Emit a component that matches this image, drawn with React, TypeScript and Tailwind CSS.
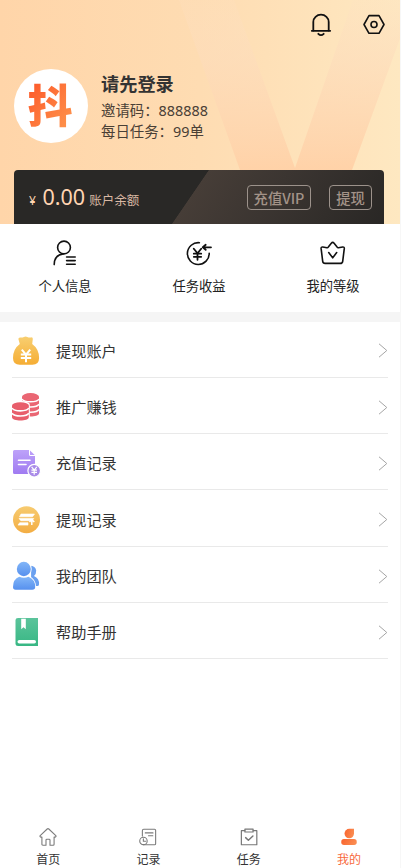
import type { ReactNode } from "react";

const stroke = { fill: "none", strokeLinecap: "round", strokeLinejoin: "round" } as const;

function Bell() {
  return (
    <svg width="22" height="26" viewBox="0 0 22 26" {...stroke} stroke="#111" strokeWidth="1.8">
      <path d="M3.300 18.600V9.900a7.700 7.200 0 0 1 15.400 0v8.700" />
      <path d="M1.800 18.800h18.400M8.300 21.800q2.700 2.600 5.400 0" />
    </svg>
  );
}

function Gear() {
  return (
    <svg width="24" height="26" viewBox="0 0 24 26" {...stroke} stroke="#111" strokeWidth="1.6">
      <path d="M7 3.600h10l5 8.900-5 8.800H7l-5-8.800z" />
      <circle cx="12" cy="12.500" r="3" />
    </svg>
  );
}

function ProfileIcon() {
  return (
    <svg width="28" height="28" viewBox="0 0 28 28" {...stroke} stroke="#111" strokeWidth="1.6">
      <circle cx="13" cy="8.500" r="6.400" />
      <path d="M3.200 25.600c0-6.200 3.700-10 9-10.700M15.600 18h8.600M15.600 21.600h8.600M15.600 25.200h8.600" />
    </svg>
  );
}

function IncomeIcon() {
  return (
    <svg width="28" height="28" viewBox="0 0 28 28" {...stroke} stroke="#111" strokeWidth="1.6">
      <path d="M14.400 3.700A10.900 10.900 0 1 0 24.200 14.200" />
      <path d="M8.800 9.700l3.700 4.600 3.700-4.600M12.500 14.300v6.500M8.800 14.700h7.400M8.800 17.800h7.400" strokeWidth="1.8" />
      <path d="M26 8.300h-8M20.700 5.800l-2.900 2.500 2.900 2.500" strokeWidth="1.800" />
    </svg>
  );
}

function LevelIcon() {
  return (
    <svg width="28" height="28" viewBox="0 0 28 28" {...stroke} stroke="#111" strokeWidth="1.6">
      <path d="M3.700 8l4.300.7q.8.1 1.300-.6l3-3.900q1.400-1.600 2.800 0l3 3.900q.5.700 1.300.6l4.300-.7q1.700-.2 1.600 1.400L23.700 22.300q-.3 2.100-2.400 2.100H6.100q-2.100 0-2.400-2.100L2.100 9.400Q2 7.800 3.700 8z" />
      <path d="M9.700 13.600l4 5.200 4-5.200" />
    </svg>
  );
}

function BagIcon() {
  return (
    <svg width="30" height="30" viewBox="0 0 30 30">
      <defs>
        <linearGradient id="bag" x1="0" y1="0" x2="0" y2="1">
          <stop stopColor="#f8cf71" /><stop offset="1" stopColor="#f5ad34" />
        </linearGradient>
      </defs>
      <path d="M6.400 3q0-1.600 1.800-1.500 2 .4 3.700-.6 1.700-.9 3.400 0 1.800 1 3.900.5 1.700-.3 1.600 1.600L20.200 8q6.900 5 6.900 14 0 6.800-6.800 6.800H7.800Q1 28.800 1 22q0-9 6.800-14z" fill="url(#bag)" />
      <path d="M9.800 13.700l4.200 5 4.200-5M14 18.700v7.500M8.800 18.500h10.400M8.800 22h10.400" stroke="#fff" strokeWidth="2" fill="none" />
    </svg>
  );
}

function CoinsIcon() {
  return (
    <svg width="30" height="30" viewBox="0 0 30 30">
      <g fill="#ea6673">
        <path d="M10 5v16.500c0 4 17 4 17 0V5z" />
        <ellipse cx="18.500" cy="4.600" rx="8.500" ry="3.500" />
      </g>
      <path d="M10 7c2 3.700 15 3.700 17 0M10 12.200c2 3.700 15 3.700 17 0M10 17.400c2 3.700 15 3.700 17 0" fill="none" stroke="#fff" strokeWidth="1.500" />
      <path d="M-.4 12.800c0-5 18.200-5 18.200 0v16H-.4z" fill="#fff" />
      <path d="M0 14v11.300c0 4.300 16.800 4.300 16.800 0V14z" fill="#e85e6b" />
      <ellipse cx="8.400" cy="13.600" rx="8.400" ry="3.400" fill="#e85e6b" />
      <path d="M0 16c2 3.800 14.800 3.800 16.800 0M0 21.200c2 3.800 14.800 3.800 16.800 0" fill="none" stroke="#fff" strokeWidth="1.600" />
    </svg>
  );
}

function RechargeIcon() {
  return (
    <svg width="30" height="30" viewBox="0 0 30 30">
      <defs>
        <linearGradient id="page" x1="0" y1="0" x2="0" y2="1">
          <stop stopColor="#bda2f9" /><stop offset="1" stopColor="#a07bf1" />
        </linearGradient>
      </defs>
      <path d="M2.500 2H17v4.500q0 1.500 1.500 1.500H23v18H2.500Q1 26 1 24.500v-21Q1 2 2.500 2z" fill="url(#page)" />
      <path d="M18 2.500L22.700 7H18z" fill="#b99cf8" />
      <path d="M6.500 12.300H18M6.500 16.500h7.500" stroke="#fff" strokeWidth="1.600" strokeLinecap="round" />
      <circle cx="22.200" cy="22.700" r="6.300" fill="#a98be8" stroke="#fff" strokeWidth="1.200" />
      <path d="M19.600 18.900l2.600 3.200 2.600-3.200M22.200 22v4.700M19.400 22.200H25M19.400 24.400H25" stroke="#fff" strokeWidth="1.200" fill="none" />
    </svg>
  );
}

function WithdrawIcon() {
  return (
    <svg width="30" height="30" viewBox="0 0 30 30">
      <defs>
        <linearGradient id="disc" x1="0" y1="0" x2="0" y2="1">
          <stop stopColor="#f7cb70" /><stop offset="1" stopColor="#f3ad43" />
        </linearGradient>
      </defs>
      <circle cx="14.500" cy="14.800" r="13.500" fill="url(#disc)" />
      <path d="M9 9h13.500l-2 2.800h-13zM7 13.500h14.800l-1.800 2.200H8.800zM7.700 17.700h8.300v2.400H6z" fill="#fff" stroke="#fff" strokeWidth=".6" strokeLinejoin="round" />
      <path d="M19.800 20v-4.600M17.500 17l2.300-2.400 2.500 2.400" fill="none" stroke="#fff" strokeWidth="1.500" />
    </svg>
  );
}

function TeamIcon() {
  return (
    <svg width="30" height="30" viewBox="0 0 30 30">
      <defs>
        <linearGradient id="team" x1="0" y1="0" x2="0" y2="1">
          <stop stopColor="#82b6f8" /><stop offset="1" stopColor="#5690ee" />
        </linearGradient>
      </defs>
      <path d="M17 4.700q6.500-.4 7.200 4.900.2 3.300-2.200 5.500 5.500 2.500 5 8.300-.2 1.700-1.900 1.500h-6V5z" fill="#6aa0f0" />
      <g fill="url(#team)" stroke="#fff" strokeWidth="1.800" paintOrder="stroke">
        <path d="M7.300 15.800q4.700 2.100 9.200 0 6.700 2.700 6.700 10.200 0 2.800-3 2.800H3.600Q1 28.800 1 26q0-7.800 6.300-10.200z" />
        <ellipse cx="11.800" cy="8" rx="7" ry="7.200" />
      </g>
    </svg>
  );
}

function BookIcon() {
  return (
    <svg width="30" height="30" viewBox="0 0 30 30">
      <defs>
        <linearGradient id="book" x1="0" y1="0" x2="0" y2="1">
          <stop stopColor="#5bc49b" /><stop offset="1" stopColor="#38b784" />
        </linearGradient>
      </defs>
      <path d="M6 1h20v28H6q-2.500 0-2.500-2V3Q3.500 1 6 1z" fill="url(#book)" />
      <path d="M9.200 1.800h4.600v10.400l-2.300-2-2.300 2z" fill="#fff" />
      <rect x="5.500" y="23" width="18.500" height="3.600" rx="1.800" fill="#fff" />
    </svg>
  );
}

function HomeTab() {
  return (
    <svg width="22" height="22" viewBox="0 0 22 22" {...stroke} stroke="#7b7b7b" strokeWidth="1.200">
      <path d="M10.100 2.200q.9-.7 1.800 0l7.700 7.200q.8 1.400-.8 1.700h-1.100v7.800q0 1.100-1.100 1.100h-3.400v-5.600q0-1-1-1H9.800q-1 0-1 1V20H5.400q-1.100 0-1.100-1.100v-7.800H3.200q-1.600-.3-.8-1.700z" />
    </svg>
  );
}

function RecordTab() {
  return (
    <svg width="22" height="22" viewBox="0 0 22 22" {...stroke} stroke="#7b7b7b" strokeWidth="1.200">
      <path d="M4.800 10V4q0-1.500 1.500-1.500h11.900q1.200 0 1.200 1.200v14.600q0 1.200-1.200 1.200H6M8 6.500h8.500M11.500 9.600h4.800" />
      <circle cx="6" cy="15.300" r="4.100" />
      <path d="M5.900 13v2.700h2.500" />
    </svg>
  );
}

function TaskTab() {
  return (
    <svg width="22" height="22" viewBox="0 0 22 22" {...stroke} stroke="#777" strokeWidth="1.300">
      <path d="M6.500 4H2.600v15.500h17V4h-4" />
      <rect x="6.500" y="2.300" width="9" height="3.200" />
      <path d="M7.300 11.700l3 2.800 5-4.700" strokeWidth="1.600" />
    </svg>
  );
}

function MineTab() {
  return (
    <svg width="22" height="22" viewBox="0 0 22 22">
      <defs>
        <linearGradient id="mine" x1="0" y1="0" x2="1" y2=".3">
          <stop stopColor="#f9622c" /><stop offset="1" stopColor="#fa8b50" />
        </linearGradient>
      </defs>
      <path d="M11.300 2h5.200v5.200a5.200 5.200 0 1 1-5.200-5.200z" fill="url(#mine)" />
      <rect x="2.500" y="13.200" width="17" height="6.500" rx="3" fill="url(#mine)" />
    </svg>
  );
}

const shortcuts: { label: string; icon: ReactNode }[] = [
  { label: "个人信息", icon: <ProfileIcon /> },
  { label: "任务收益", icon: <IncomeIcon /> },
  { label: "我的等级", icon: <LevelIcon /> },
];

const rows: { label: string; icon: ReactNode }[] = [
  { label: "提现账户", icon: <BagIcon /> },
  { label: "推广赚钱", icon: <CoinsIcon /> },
  { label: "充值记录", icon: <RechargeIcon /> },
  { label: "提现记录", icon: <WithdrawIcon /> },
  { label: "我的团队", icon: <TeamIcon /> },
  { label: "帮助手册", icon: <BookIcon /> },
];

const tabs: { label: string; icon: ReactNode; active?: boolean }[] = [
  { label: "首页", icon: <HomeTab /> },
  { label: "记录", icon: <RecordTab /> },
  { label: "任务", icon: <TaskTab /> },
  { label: "我的", icon: <MineTab />, active: true },
];

function HeaderBackdrop() {
  return (
    <svg className="absolute inset-0" width="400" height="224" viewBox="0 0 400 224">
      <defs>
        <linearGradient id="vfade" x1="0" y1="0" x2="0" y2="1">
          <stop stopColor="#fde0c2" stopOpacity=".2" />
          <stop offset=".35" stopColor="#fddcbb" stopOpacity=".6" />
          <stop offset="1" stopColor="#ffd2a8" />
        </linearGradient>
      </defs>
      <path d="M179 0h55l61 168 58-168h61l-62 170H240z" fill="url(#vfade)" />
    </svg>
  );
}

export default function App() {
  return (
    <div className="h-[868px] w-[401px] overflow-hidden bg-[#f7f7f7] font-['Noto_Sans','Noto_Sans_CJK_SC',sans-serif] text-[#222]">
      <div className="flex h-full w-[400px] flex-col bg-white">
        <header className="relative h-[224px] shrink-0 overflow-hidden bg-linear-to-r from-[#ffd5a9] via-[#fedcb2] to-[#fee8c1]">
          <HeaderBackdrop />
          <div className="relative flex h-full flex-col">
            <div className="flex h-[50px] items-center justify-end gap-[30px] pr-[14px]">
              <Bell />
              <Gear />
            </div>
            <div className="flex h-[120px] items-start pt-[19px] pl-[14px]">
              <div className="flex h-[74px] w-[74px] items-center justify-center rounded-full bg-white pr-[2px] pb-[5px]">
                <span className="bg-linear-to-br from-[#fc4f24] to-[#fd984f] bg-clip-text font-['Noto_Sans_CJK_SC',sans-serif] text-[45px] leading-[58px] font-black text-transparent">抖</span>
              </div>
              <div className="flex flex-col pt-[2px] pl-[13px] text-[14.400px] leading-[21px] text-[#4a4036]">
                <h1 className="mb-[3px] text-[18.200px] leading-[26px] font-bold text-[#333]">请先登录</h1>
                <p>邀请码：888888</p>
                <p>每日任务：99单</p>
              </div>
            </div>
            <div className="ml-[13.500px] flex h-[54px] w-[370.500px] items-center justify-between rounded-t-[4px] bg-[linear-gradient(124.4deg,#292826_0_47.800%,#463d37_48%,#3b3531_68%,#292725_100%)] pr-[12px] pl-[15.500px]">
              <div className="flex items-baseline text-[#ffd5b2]">
                <span className="w-[13.500px] text-[12px]">¥</span>
                <span className="text-[21.500px] leading-[30px]">0.00</span>
                <span className="ml-[4px] text-[12.500px] text-[#d9b9a4]">账户余额</span>
              </div>
              <div className="flex gap-[18px] font-['Noto_Sans_CJK_SC',sans-serif] text-[14.300px] font-medium text-[#a39388]">
                <button className="h-[25px] w-[64px] rounded-[4px] border border-[#9c928b] leading-[23px]">充值VIP</button>
                <button className="h-[25px] w-[43px] rounded-[4px] border border-[#9c928b] leading-[23px]">提现</button>
              </div>
            </div>
          </div>
        </header>

        <section className="flex h-[88px] shrink-0 justify-between pt-[15px] pr-[27px] pl-[25px]">
          {shortcuts.map((s) => (
            <div key={s.label} className="flex w-[80px] flex-col items-center">
              {s.icon}
              <span className="mt-[9px] text-[13.300px] leading-[20px]">{s.label}</span>
            </div>
          ))}
        </section>

        <div className="h-[9.500px] shrink-0 bg-[#f5f5f5]" />

        <ul className="mr-[12.500px] ml-[12px] flex flex-col">
          {rows.map((r) => (
            <li key={r.label} className="flex h-[56.300px] items-center border-b border-[#e9e9e9] pt-[3.500px]">
              {r.icon}
              <span className="ml-[14px] flex-1 text-[15.200px] leading-[22px] text-[#333]">{r.label}</span>
              <svg width="10" height="15" viewBox="0 0 10 15" fill="none" stroke="#a5a5a5" strokeWidth="1">
                <path d="M1 .8l7.800 6.700L1 14.200" />
              </svg>
            </li>
          ))}
        </ul>

        <nav className="mt-auto -ml-[2px] flex h-[41px] shrink-0">
          {tabs.map((t) => (
            <div key={t.label} className={`flex w-[100.300px] flex-col items-center text-[12px] leading-[16px] ${t.active ? "text-[#f8693c]" : "text-[#333]"}`}>
              {t.icon}
              <span className="mt-[5px]">{t.label}</span>
            </div>
          ))}
        </nav>
      </div>
    </div>
  );
}
